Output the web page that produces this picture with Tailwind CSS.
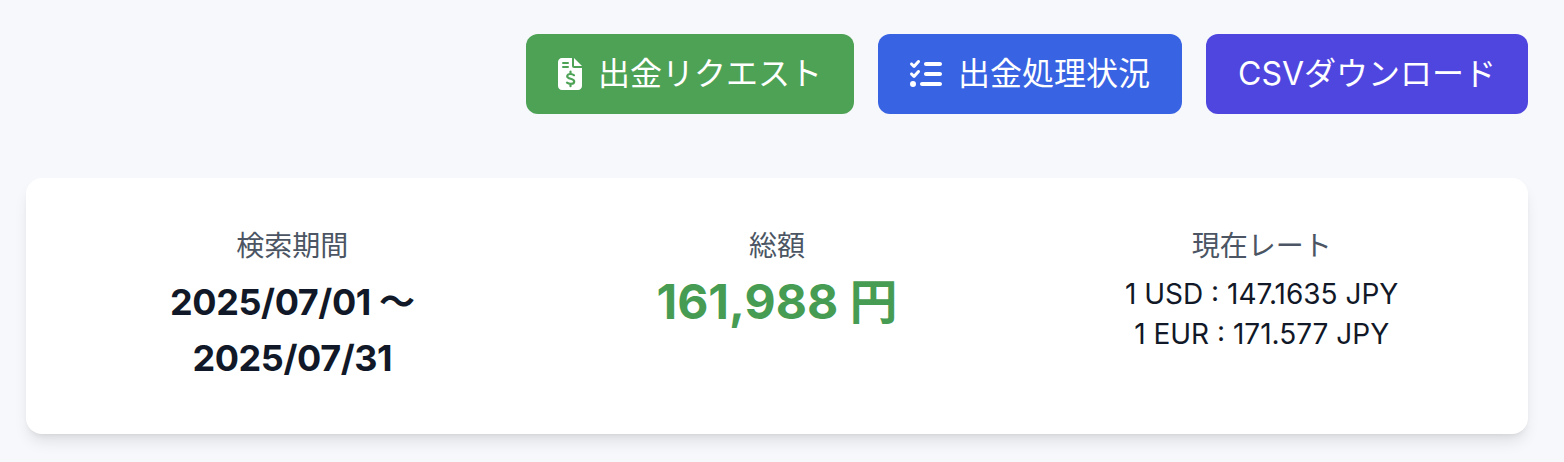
<!DOCTYPE html>
<html lang="ja">
<head>
<meta charset="utf-8">
<script src="https://cdn.jsdelivr.net/npm/@tailwindcss/browser@4"></script>
</head>
<body class="m-0 h-[462px] overflow-hidden bg-[#f7f8fb] font-['Inter','Noto_Sans_CJK_JP',sans-serif]">
<div class="px-[36px] pt-[34px] pb-[28px] pl-[26px]">
  <div class="flex justify-end gap-[24px]">
    <button class="flex h-[80px] w-[328px] items-center justify-center gap-[16px] rounded-[12px] bg-[#4ea256] text-[32px] text-white">
      <svg class="h-[32px] w-[24px]" viewBox="0 0 24 32"><path fill="#fff" d="M4 0h10v8c0 1.1.9 2 2 2h8v18c0 2.2-1.800 4-4 4H4c-2.200 0-4-1.800-4-4V4c0-2.200 1.800-4 4-4zM16 0l8 8h-8z"/><path fill="none" stroke="#4ea256" stroke-width="2" stroke-linecap="round" d="M5 5h5M5 9h5"/><path fill="none" stroke="#4ea256" stroke-width="2.200" stroke-linecap="round" d="M16 17.200c-.8-.8-2.400-1.200-3.600-1.200-1.800 0-3.200.9-3.200 2.300 0 3.200 7 1.800 7 5.100 0 1.500-1.500 2.400-3.400 2.400-1.300 0-2.800-.4-3.800-1.200M12.500 13.500v2.200M12.500 26v2.200"/></svg>
      <span>出金リクエスト</span>
    </button>
    <button class="flex h-[80px] w-[304px] items-center justify-center gap-[16px] rounded-[12px] bg-[#3863e3] text-[32px] text-white">
      <svg class="h-[32px] w-[32px]" viewBox="0 0 512 512" fill="currentColor"><path d="M152 38c10 9 11 24 2 34L82 152c-4 5-11 8-17 8s-13-2-18-7L7 113c-9-9-9-25 0-34s25-9 34 0l22 22 55-61c9-10 24-11 34-2zm0 160c10 9 11 24 2 34l-72 80c-4 5-11 8-17 8s-13-2-18-7l-40-40c-9-9-9-25 0-34s25-9 34 0l22 22 55-61c9-10 24-11 34-2zM224 96c0-18 14-32 32-32h224c18 0 32 14 32 32s-14 32-32 32H256c-18 0-32-14-32-32zm0 160c0-18 14-32 32-32h224c18 0 32 14 32 32s-14 32-32 32H256c-18 0-32-14-32-32zM160 416c0-18 14-32 32-32h288c18 0 32 14 32 32s-14 32-32 32H192c-18 0-32-14-32-32zM48 368a48 48 0 1 1 0 96 48 48 0 1 1 0-96z"/></svg>
      <span>出金処理状況</span>
    </button>
    <button class="h-[80px] w-[322px] rounded-[12px] bg-[#4f46e0] text-[32px] text-white">CSVダウンロード</button>
  </div>
  <div class="mt-[64px] grid h-[256px] w-[1502px] grid-cols-3 gap-[48px] rounded-[16px] bg-white p-[48px] text-center shadow-lg">
    <div>
      <p class="text-[28px] leading-[40px] text-[#4b5563]">検索期間</p>
      <p class="mx-auto mt-[8px] w-[300px] text-[36px] leading-[56px] font-bold tracking-[-0.4px] text-[#111827]">2025/07/01 〜 2025/07/31</p>
    </div>
    <div>
      <p class="text-[28px] leading-[40px] text-[#4b5563]">総額</p>
      <p class="mt-[8px] text-[48px] leading-[56px] font-bold text-[#479c53]">161,988 円</p>
    </div>
    <div>
      <p class="text-[28px] leading-[40px] text-[#4b5563]">現在レート</p>
      <p class="mt-[8px] text-[28px] leading-[40px] text-[#111827]">1 USD : 147.1635 JPY</p>
      <p class="text-[28px] leading-[40px] text-[#111827]">1 EUR : 171.577 JPY</p>
    </div>
  </div>
</div>
</body>
</html>
